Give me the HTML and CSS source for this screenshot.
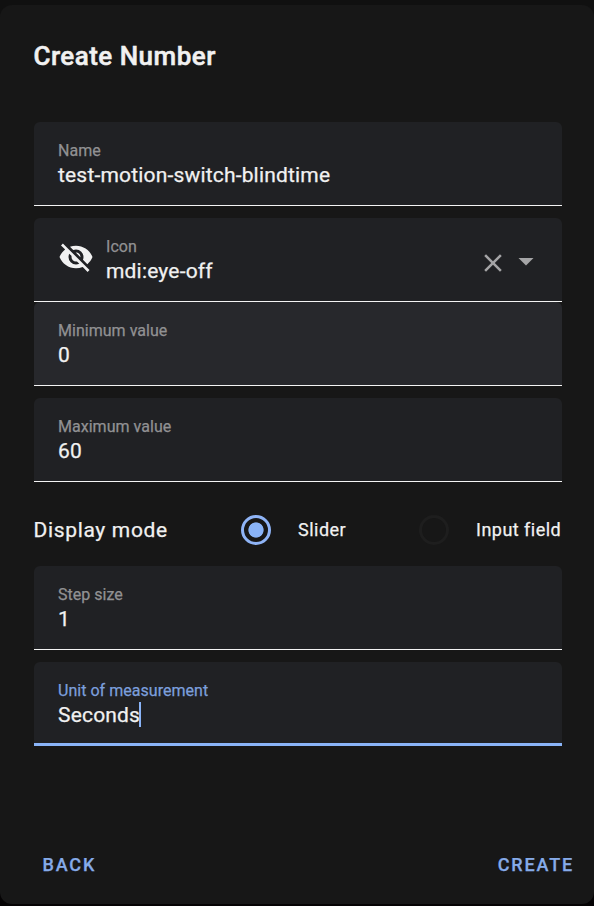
FILE: index.html
```html
<!DOCTYPE html>
<html lang="en">
<head>
<meta charset="utf-8">
<title>Create Number</title>
<link rel="stylesheet" href="styles.css">
</head>
<body>
<main class="dialog">
  <h1 class="title">Create Number</h1>
  <div class="form">
    <div class="field gap">
      <div class="text"><span class="label">Name</span><span class="value">test-motion-switch-blindtime</span></div>
    </div>
    <div class="field">
      <svg class="eye" viewBox="0 0 24 24"><path d="M11.83,9L15,12.16C15,12.11 15,12.05 15,12A3,3 0 0,0 12,9C11.94,9 11.89,9 11.83,9M7.53,9.8L9.08,11.35C9.03,11.56 9,11.77 9,12A3,3 0 0,0 12,15C12.22,15 12.44,14.97 12.65,14.92L14.2,16.47C13.53,16.8 12.79,17 12,17A5,5 0 0,1 7,12C7,11.21 7.2,10.47 7.53,9.8M2,4.27L4.28,6.55L4.73,7C3.08,8.3 1.78,10 1,12C2.73,16.39 7,19.5 12,19.5C13.55,19.5 15.03,19.2 16.38,18.66L16.81,19.08L19.73,22L21,20.73L3.27,3M12,7A5,5 0 0,1 17,12C17,12.64 16.87,13.26 16.64,13.82L19.57,16.75C21.07,15.5 22.27,13.86 23,12C21.27,7.61 17,4.5 12,4.5C10.6,4.5 9.26,4.75 8,5.2L10.17,7.35C10.74,7.13 11.35,7 12,7Z"/></svg>
      <div class="text"><span class="label">Icon</span><span class="value">mdi:eye-off</span></div>
      <svg class="clear" viewBox="0 0 24 24"><path d="M19,6.41L17.59,5L12,10.59L6.41,5L5,6.41L10.59,12L5,17.59L6.41,19L12,13.41L17.59,19L19,17.59L13.41,12L19,6.41Z"/></svg>
      <svg class="arrow" viewBox="0 0 24 24"><path d="M7,10L12,15L17,10H7Z"/></svg>
    </div>
    <div class="field hover gap">
      <div class="text"><span class="label">Minimum value</span><span class="value">0</span></div>
    </div>
    <div class="field">
      <div class="text"><span class="label">Maximum value</span><span class="value">60</span></div>
    </div>
    <div class="mode">
      <span class="mode-title">Display mode</span>
      <span class="radio on"></span>
      <span class="option slider">Slider</span>
      <span class="radio"></span>
      <span class="option">Input field</span>
    </div>
    <div class="field gap">
      <div class="text"><span class="label">Step size</span><span class="value">1</span></div>
    </div>
    <div class="field focused">
      <div class="text"><span class="label">Unit of measurement</span><span class="value">Seconds<i class="caret"></i></span></div>
    </div>
  </div>
  <footer class="actions"><span class="action">BACK</span><span class="action">CREATE</span></footer>
</main>
</body>
</html>
```
FILE: styles.css
```css
* { box-sizing: border-box; }
body {
  margin: 0;
  height: 906px;
  padding: 5px 0 2px;
  overflow: hidden;
  background: linear-gradient(#101010 0 50%, #050304 50%);
  font-family: Roboto, sans-serif;
  color: #f1f1f1;
  -webkit-text-stroke: .25px;
}
.dialog {
  height: 899px;
  padding: 0 32px 0 34px;
  border-radius: 12px;
  background: #171717;
  display: flex;
  flex-direction: column;
}
.title {
  margin: 0 0 0 -.5px;
  height: 117px;
  padding-top: 33px;
  font-size: 26px;
  line-height: 36px;
  font-weight: 500;
  letter-spacing: .47px;
  -webkit-text-stroke: .5px;
}
.field {
  height: 84px;
  padding: 0 24px;
  display: flex;
  border-radius: 6px 6px 0 0;
  background: linear-gradient(#f4f4f4, #f4f4f4) bottom / 100% 1px no-repeat #202124;
}
.gap { margin-bottom: 12px; }
.field.hover { background-color: #27282c; }
.text {
  flex: 1;
  padding-top: 19px;
  display: flex;
  flex-direction: column;
}
.label {
  font-size: 16px;
  line-height: 19px;
  letter-spacing: .03px;
  color: #919193;
}
.value {
  display: flex;
  font-size: 21px;
  line-height: 30px;
  letter-spacing: .18px;
}
.eye {
  width: 36px;
  height: 36px;
  margin: 21px 12px 0 0;
  fill: #f1f1f1;
}
.clear {
  width: 30px;
  height: 30px;
  margin: 30px 0 0;
  fill: #a5a5a7;
}
.arrow {
  width: 36px;
  height: 36px;
  margin: 25px -6px 0 0;
  fill: #a5a5a7;
}
.focused { background: linear-gradient(#8ab4f8, #8ab4f8) bottom / 100% 3px no-repeat #202124; }
.focused .label { color: #7c9fdc; }
.caret {
  width: 2px;
  height: 25px;
  margin: 2px 0 0 -1.5px;
  background: #8ab4f8;
}
.mode {
  height: 84px;
  padding-top: 12px;
  display: flex;
  align-items: center;
}
.mode-title {
  width: 207.5px;
  margin-left: -.5px;
  font-size: 21px;
  letter-spacing: .66px;
}
.radio {
  width: 30px;
  height: 30px;
  margin-right: 27px;
  border: 3px solid #1e1e1e;
  border-radius: 50%;
}
.radio.on {
  border-color: #8fb4f6;
  background: radial-gradient(circle, #8ab4f8 7.2px, transparent 8px);
}
.option {
  padding-bottom: 2px;
  font-size: 18px;
  letter-spacing: .48px;
  white-space: nowrap;
}
.slider { width: 121px; }
.actions {
  margin: 106px -12px 0 8.5px;
  display: flex;
  justify-content: space-between;
  font-size: 18px;
  line-height: 26px;
  font-weight: 500;
  letter-spacing: 1.85px;
  color: #86abe9;
}
```
